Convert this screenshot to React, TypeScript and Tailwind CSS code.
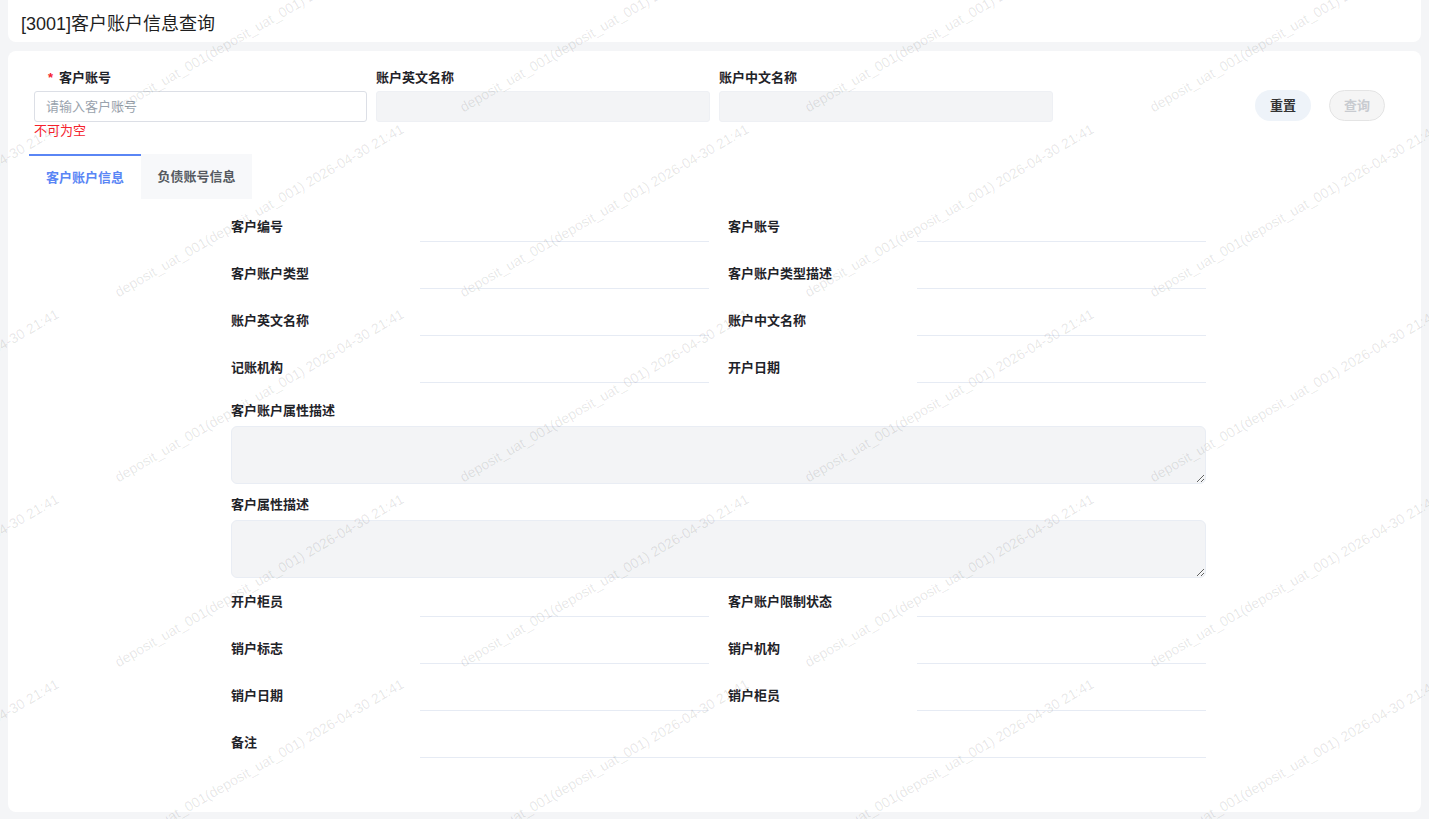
import { useState } from "react";

const FONT = {
  fontFamily: '"Liberation Sans", "Noto Sans CJK SC", sans-serif',
};

const WATERMARK = "deposit_uat_001(deposit_uat_001) 2026-04-30 21:41";

// tiled, rotated user watermark laid over the whole page
function Watermark() {
  const cols = [-1, 0, 1, 2, 3, 4];
  const rows = [-1, 0, 1, 2, 3, 4];
  return (
    <div className="pointer-events-none absolute inset-0 z-10 overflow-hidden select-none">
      {cols.map((c) =>
        rows.map((r) => (
          <span
            key={`${c}-${r}`}
            className="absolute whitespace-nowrap text-[14px] leading-[16px] text-[rgba(0,0,0,0.1)] origin-bottom-left -rotate-[30deg]"
            style={{ left: 120 + c * 345, top: 115 + r * 185 - 16 }}
          >
            {WATERMARK}
          </span>
        )),
      )}
    </div>
  );
}

function LineField({ label }: { label: string }) {
  return (
    <div className="flex items-center">
      <div className="w-[189px] shrink-0 text-[13px] font-bold leading-[18px] text-[#1f2329]">
        {label}
      </div>
      <div className="h-[30px] flex-1 border-b border-[#e6ebf4]" />
    </div>
  );
}

function AreaField({ label, className = "" }: { label: string; className?: string }) {
  return (
    <div className={className}>
      <div className="mb-[6px] text-[13px] font-bold leading-[18px] text-[#1f2329]">
        {label}
      </div>
      <textarea
        readOnly
        className="block h-[58px] w-full rounded-md border border-[#e9edf4] bg-[#f3f4f6] outline-none"
      />
    </div>
  );
}

const topRows = [
  ["客户编号", "客户账号"],
  ["客户账户类型", "客户账户类型描述"],
  ["账户英文名称", "账户中文名称"],
  ["记账机构", "开户日期"],
];

const bottomRows = [
  ["开户柜员", "客户账户限制状态"],
  ["销户标志", "销户机构"],
  ["销户日期", "销户柜员"],
];

export default function App() {
  const [tab, setTab] = useState(0);
  const tabs = ["客户账户信息", "负债账号信息"];

  return (
    <div className="relative min-h-[819px] bg-[#f4f5f7] px-2" style={FONT}>
      <Watermark />

      {/* Page title */}
      <div className="flex h-[42px] items-center rounded-b-lg bg-white pl-[13px] pt-[5px]">
        <h1 className="text-[18px] leading-6 text-[#1f1f1f]">[3001]客户账户信息查询</h1>
      </div>

      <div className="mt-[9px] rounded-lg bg-white pb-[54px] pt-[18px]">
        {/* Query form */}
        <div className="flex items-start pl-[26px] pr-[36px]">
          <div className="flex gap-[9px]">
            <div className="w-[333px]">
              <div className="mb-1 pl-[14px] text-[13px] font-bold leading-[18px] text-[#1f2329]">
                <span className="mr-[6px] text-[#f5222d]">*</span>客户账号
              </div>
              <input
                placeholder="请输入客户账号"
                className="h-[31px] w-full rounded-[3px] border border-[#dcdfe6] bg-white px-[11px] text-[13px] outline-none placeholder:text-[#9aa3ad]"
              />
              <div className="mt-[1px] text-[13px] leading-[16px] text-[#f5222d]">不可为空</div>
            </div>
            <div className="w-[334px]">
              <div className="mb-1 text-[13px] font-bold leading-[18px] text-[#1f2329]">账户英文名称</div>
              <div className="h-[31px] rounded-[3px] border border-[#eef0f4] bg-[#f3f4f6]" />
            </div>
            <div className="w-[334px]">
              <div className="mb-1 text-[13px] font-bold leading-[18px] text-[#1f2329]">账户中文名称</div>
              <div className="h-[31px] rounded-[3px] border border-[#eef0f4] bg-[#f3f4f6]" />
            </div>
          </div>
          <div className="ml-auto flex gap-[18px] pt-[21px]">
            <button className="h-[31px] w-[56px] rounded-full bg-[#eef3f9] text-[13px] font-bold text-[#333]">
              重置
            </button>
            <button
              disabled
              className="h-[31px] w-[56px] rounded-full border border-[#e4e4e4] bg-[#f5f5f5] text-[13px] font-bold text-[#c8cbd0]"
            >
              查询
            </button>
          </div>
        </div>

        {/* Tabs */}
        <div className="mt-[15px] flex pl-[21px]">
          {tabs.map((t, i) => (
            <button
              key={t}
              onClick={() => setTab(i)}
              className={
                i === tab
                  ? "h-[45px] w-[112px] border-t-2 border-[#5a86f5] text-[13px] font-bold text-[#5a86f5]"
                  : "h-[45px] w-[111px] bg-[#f7f8fa] text-[13px] font-bold text-[#555a61]"
              }
            >
              {t}
            </button>
          ))}
        </div>

        {/* Account details */}
        <div className="ml-[223px] mt-[13px] w-[975px]">
          <div className="grid grid-cols-2 gap-x-[19px] gap-y-[17px]">
            {topRows.flat().map((l) => (
              <LineField key={l} label={l} />
            ))}
          </div>

          <AreaField label="客户账户属性描述" className="mt-[19px]" />
          <AreaField label="客户属性描述" className="mt-3" />

          <div className="mt-[9px] grid grid-cols-2 gap-x-[19px] gap-y-[17px]">
            {bottomRows.flat().map((l) => (
              <LineField key={l} label={l} />
            ))}
            <div className="col-span-2">
              <LineField label="备注" />
            </div>
          </div>
        </div>
      </div>
      <div className="h-[7px]" />
    </div>
  );
}
